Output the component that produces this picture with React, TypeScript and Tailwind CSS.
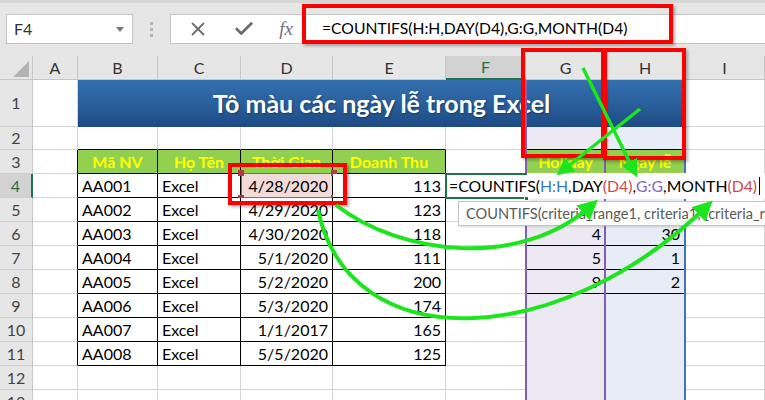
import React from 'react';
import { X, Check } from 'lucide-react';

const ROWS = [
  ['AA001', 'Excel', '4/28/2020', '113'],
  ['AA002', 'Excel', '4/29/2020', '123'],
  ['AA003', 'Excel', '4/30/2020', '118'],
  ['AA004', 'Excel', '5/1/2020', '111'],
  ['AA005', 'Excel', '5/2/2020', '200'],
  ['AA006', 'Excel', '5/3/2020', '174'],
  ['AA007', 'Excel', '1/1/2017', '165'],
  ['AA008', 'Excel', '5/5/2020', '125'],
];

const HEADS = ['', 'Mã NV', 'Họ Tên', 'Thời Gian', 'Doanh Thu', '', 'Holiday', 'Ngày lễ', ''];
const HOLI: Record<number, [string, string]> = { 6: ['4', '30'], 7: ['5', '1'], 8: ['9', '2'] };
const LETTERS = ['A', 'B', 'C', 'D', 'E', 'F', 'G', 'H', 'I'];

// border colours for a cell (c: 0 = A ... 8 = I)
function edges(r: number, c: number) {
  let right = 'border-r-[#d4d4d4]';
  let bottom = 'border-b-[#d4d4d4]';
  if (r >= 3 && r <= 11 && c <= 4) right = 'border-r-black';
  if (c >= 1 && c <= 4 && r >= 2 && r <= 11) bottom = 'border-b-black';
  if (c === 6 || c === 7) {
    right = 'border-r-transparent';
    bottom = r >= 2 && r <= 8 ? 'border-b-black' : 'border-b-transparent';
  }
  return `border-r border-b ${right} ${bottom}`;
}

function RowHead({ r }: { r: number }) {
  const active = r === 4;
  return (
    <div
      className={`flex items-center justify-center text-[16px] border-b border-b-[#d0d0d0] ${
        active
          ? 'bg-[#d2d2d2] text-[#217346] border-r-2 border-r-[#217346]'
          : 'bg-[#e6e6e6] text-[#444] border-r border-r-[#c6c6c6]'
      }`}
    >
      {r}
    </div>
  );
}

function Cell({ r, c }: { r: number; c: number }) {
  const isHead = r === 3 && HEADS[c] !== '';
  let bg = 'bg-white';
  if (r >= 2 && c === 6) bg = 'bg-[#ece9f3]';
  if (r >= 2 && c === 7) bg = 'bg-[#e7ecf6]';
  if (isHead) bg = 'bg-[#92d050]';
  if (r === 4 && c === 3) bg = 'bg-[#f2dcdb]';

  let text = '';
  let align = 'justify-start';
  if (isHead) {
    text = HEADS[c];
    align = 'justify-center';
  } else if (r >= 4 && r <= 11 && c >= 1 && c <= 4) {
    text = ROWS[r - 4][c - 1];
    if (c >= 3) align = 'justify-end';
  } else if (HOLI[r] && (c === 6 || c === 7)) {
    text = HOLI[r][c - 6];
    align = 'justify-end';
  }

  return (
    <div
      className={`relative flex items-center px-[4px] text-[16px] whitespace-nowrap ${bg} ${align} ${edges(r, c)} ${
        isHead ? 'font-bold text-[#ffff00]' : 'text-black'
      }`}
    >
      {text}
      {r === 4 && c === 3 && (
        <div className="absolute left-[0px] top-[-1px] w-[93px] h-[25px] border-[1.5px] border-[#c0504d]">
          <span className="absolute left-[-4px] top-[-4px] w-[6px] h-[6px] bg-[#b0394a]" />
          <span className="absolute right-[-4px] top-[-4px] w-[6px] h-[6px] bg-[#b0394a]" />
          <span className="absolute left-[-4px] bottom-[-4px] w-[6px] h-[6px] bg-[#b0394a]" />
          <span className="absolute right-[-4px] bottom-[-4px] w-[6px] h-[6px] bg-[#b0394a]" />
        </div>
      )}
    </div>
  );
}

function Formula() {
  return (
    <>
      =COUNTIFS(<span className="text-[#3a78c9]">H:H</span>,DAY
      <span className="text-[#d04a4a]">(D4)</span>,<span className="text-[#8a5fc4]">G:G</span>,MONTH
      <span className="text-[#d04a4a]">(D4)</span>
    </>
  );
}

function FormulaBar() {
  return (
    <div className="h-[56px] bg-[#e6e6e6] border-t-[3px] border-t-[#d6d6d6] flex items-start pt-[11px]">
      <div className="ml-[6px] w-[127px] h-[30px] bg-white border border-[#c6c6c6] flex items-center justify-between pl-[7px] pr-[8px]">
        <span className="text-[16px] text-[#333]">F4</span>
        <svg width="8" height="5" viewBox="0 0 8 5">
          <path d="M0 0 L8 0 L4 5 Z" fill="#777" />
        </svg>
      </div>
      <div className="w-[37px] h-[30px] flex flex-col items-center justify-center gap-[3px]">
        <span className="w-[3px] h-[3px] bg-[#b4b4b4]" />
        <span className="w-[3px] h-[3px] bg-[#b4b4b4]" />
        <span className="w-[3px] h-[3px] bg-[#b4b4b4]" />
      </div>
      <div className="flex-1 h-[30px] bg-white border border-[#c6c6c6] border-r-0 flex items-center">
        <div className="w-[134px] flex items-center justify-around pl-[4px] text-[#6d6d6d]">
          <X size={22} strokeWidth={2} />
          <Check size={22} strokeWidth={3} />
          <span className="font-['Liberation_Serif',serif] italic text-[19px] text-[#707070]">fx</span>
        </div>
        <div className="pl-[17px] text-[15.7px] text-black whitespace-nowrap">
          =COUNTIFS(H:H,DAY(D4),G:G,MONTH(D4)
        </div>
      </div>
    </div>
  );
}

export default function App() {
  const rows = Array.from({ length: 13 }, (_, i) => i + 1);
  return (
    <div className="relative w-[765px] h-[400px] overflow-hidden bg-white font-['Lato',sans-serif]">
      <FormulaBar />

      <div className="grid grid-cols-[33px_45px_80px_83px_92px_113px_80px_80px_79px_80px] grid-rows-[24px_47px_23px_repeat(11,24px)]">
        {/* column headers */}
        <div className="bg-[#e6e6e6] border-r border-b border-[#c6c6c6] flex items-end justify-end pr-[3px] pb-[2px]">
          <svg width="16" height="16" viewBox="0 0 16 16">
            <path d="M16 0 L16 16 L0 16 Z" fill="#b4b4b4" />
          </svg>
        </div>
        {LETTERS.map((l) => (
          <div
            key={l}
            className={`flex items-center justify-center text-[16px] border-r border-r-[#c6c6c6] ${
              l === 'F'
                ? 'bg-[#d2d2d2] text-[#217346] border-b-2 border-b-[#217346]'
                : 'bg-[#e6e6e6] text-[#333] border-b border-b-[#c6c6c6]'
            }`}
          >
            {l}
          </div>
        ))}

        {rows.map((r) => (
          <React.Fragment key={r}>
            <RowHead r={r} />
            {r === 1 ? (
              <>
                <Cell r={1} c={0} />
                <div className="col-span-7 flex items-center justify-center bg-linear-to-b from-[#3370ad] via-[#2a5f9d] to-[#1d4a84] text-white font-bold text-[25px] [text-shadow:1px_1px_2px_rgba(0,0,0,0.35)]">
                  Tô màu các ngày lễ trong Excel
                </div>
                <Cell r={1} c={8} />
              </>
            ) : (
              LETTERS.map((_, c) => <Cell key={c} r={r} c={c} />)
            )}
          </React.Fragment>
        ))}
      </div>

      {/* reference outlines on columns G and H */}
      <div className="absolute left-[525px] top-[80px] w-[2px] h-[320px] bg-[#7f5fb5]" />
      <div className="absolute left-[604px] top-[80px] w-[2px] h-[320px] bg-[#7f5fb5]" />
      <div className="absolute left-[684px] top-[80px] w-[2px] h-[320px] bg-[#4472c4]" />

      {/* cell being edited */}
      <div className="absolute left-[445px] top-[173px] w-[320px] h-[26px] bg-white flex items-center pl-[4px] text-[15.8px] text-black whitespace-nowrap">
        <Formula />
        <span className="ml-[2px] w-[1px] h-[18px] bg-black" />
      </div>
      <div className="absolute left-[445px] top-[173px] w-[82px] h-[26px] border-2 border-r-0 border-[#217346]" />
      <div className="absolute left-[524px] top-[196px] w-[5px] h-[5px] bg-[#217346] border border-white" />

      {/* function tooltip */}
      <div className="absolute left-[458px] top-[201px] w-[320px] h-[25px] bg-white border border-[#c4c4c4] shadow-[1px_1px_2px_rgba(0,0,0,0.15)] flex items-center pl-[7px] text-[14.6px] text-[#5a5a5a] whitespace-nowrap overflow-hidden">
        COUNTIFS(criteria_range1, criteria1, [criteria_range2, criteria2], ...)
      </div>

      {/* red annotation boxes */}
      <div className="absolute left-[302px] top-[4px] w-[371px] h-[40px] border-4 border-[#ff0000] shadow-[2px_2px_3px_rgba(0,0,0,0.3)]" />
      <div className="absolute left-[521px] top-[48px] w-[84px] h-[110px] border-4 border-[#ff0000] shadow-[2px_2px_3px_rgba(0,0,0,0.3)]" />
      <div className="absolute left-[603px] top-[48px] w-[83px] h-[112px] border-4 border-[#ff0000] shadow-[2px_2px_3px_rgba(0,0,0,0.3)]" />
      <div className="absolute left-[228px] top-[163px] w-[119px] h-[42px] border-4 border-[#ff0000] shadow-[2px_2px_3px_rgba(0,0,0,0.3)]" />

      {/* green arrows */}
      <svg className="absolute inset-0 pointer-events-none" width="765" height="400" viewBox="0 0 765 400">
        <defs>
          <marker id="ah" markerWidth="5" markerHeight="5" refX="3" refY="2.5" orient="auto" markerUnits="strokeWidth">
            <path d="M0 0 L5 2.5 L0 5 Z" fill="#1de51d" />
          </marker>
        </defs>
        <path d="M583 68 L634 171" stroke="#1de51d" strokeWidth="3.5" fill="none" markerEnd="url(#ah)" />
        <path d="M640 109 L562 171" stroke="#1de51d" strokeWidth="3.5" fill="none" markerEnd="url(#ah)" />
        <path d="M336 205 C400 255 520 270 592 205" stroke="#1de51d" strokeWidth="4" fill="none" markerEnd="url(#ah)" />
        <path d="M318 210 C350 360 560 350 707 206" stroke="#1de51d" strokeWidth="4" fill="none" markerEnd="url(#ah)" />
      </svg>
    </div>
  );
}
